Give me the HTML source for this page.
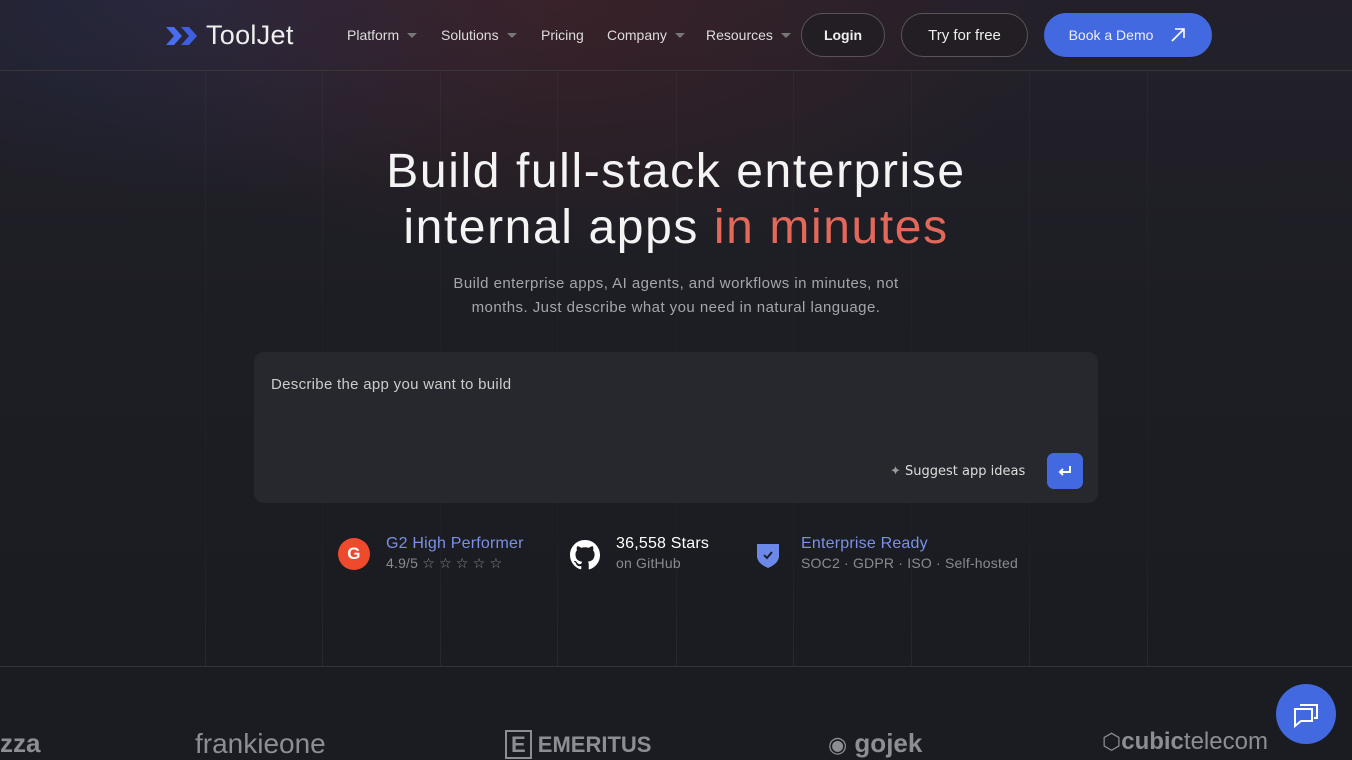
<!DOCTYPE html>
<html><head><meta charset="utf-8"><style>
*{margin:0;padding:0;box-sizing:border-box}
body{width:1352px;height:760px;overflow:hidden;background:#1a1c21;font-family:"Liberation Sans","DejaVu Sans",sans-serif;color:#fff;position:relative}
.bg{position:absolute;left:0;top:0;width:1352px;height:666px;background:radial-gradient(ellipse 500px 260px at 560px 0px,rgba(80,35,40,.5),transparent),radial-gradient(ellipse 400px 200px at 200px 0,rgba(40,50,90,.45),transparent),linear-gradient(#23202a 0,#1d1e24 300px,#1a1c21 666px)}
.vl{position:absolute;top:71px;height:595px;width:1px;background:linear-gradient(rgba(255,255,255,.03),rgba(255,255,255,.015) 40%,rgba(255,255,255,.015) 80%,rgba(255,255,255,.06))}
.hl{position:absolute;left:0;width:1352px;height:1px;background:#33343b}
nav{position:absolute;top:0;left:0;width:1352px;height:70px}
.logo{position:absolute;left:165px;top:20px;display:flex;align-items:center;font-size:27px;color:#eee;letter-spacing:.3px}
.menu{position:absolute;top:27px;font-size:14px;color:#ddd}
.car{display:inline-block;width:0;height:0;border-left:5px solid transparent;border-right:5px solid transparent;border-top:5px solid #777;margin-left:8px;vertical-align:2px}
.btn{position:absolute;top:13px;height:44px;border-radius:22px;border:1px solid #5a5458;display:flex;align-items:center;justify-content:center;font-size:15px;color:#eee;background:#221e24}
h1{position:absolute;top:144px;left:0;width:1352px;text-align:center;font-size:48px;font-weight:normal;line-height:56px;color:#f4f4f4;letter-spacing:1.6px}
h1 span{color:#e2685a}
.sub{position:absolute;top:272px;left:0;width:1352px;text-align:center;font-size:15px;line-height:24px;color:#a4a6ad;letter-spacing:.45px}
.box{position:absolute;left:254px;top:352px;width:844px;height:151px;background:#26282d;border-radius:10px}
.stat{position:absolute;top:535px;font-size:16px;letter-spacing:.2px}
.stat small{display:block;font-size:14px;color:#888b92;margin-top:2px}
.logos{position:absolute;top:728px;font-size:26px;color:#8c8e93;font-weight:bold}
</style></head><body>
<div class="bg"></div>
<div class="vl" style="left:205px"></div><div class="vl" style="left:322px"></div><div class="vl" style="left:440px"></div><div class="vl" style="left:557px"></div><div class="vl" style="left:676px"></div><div class="vl" style="left:793px"></div><div class="vl" style="left:911px"></div><div class="vl" style="left:1029px"></div><div class="vl" style="left:1147px"></div>
<div class="hl" style="top:70px;background:#3a3539"></div>
<div class="hl" style="top:666px"></div>
<nav>
<div class="logo"><svg width="36" height="24" viewBox="0 0 36 24"><path d="M1 3h8l8 9-8 9H1l8-9z" fill="#4a6cf0"/><path d="M16 3h8l8 9-8 9h-8l8-9z" fill="#3d5fe0"/></svg><span style="margin-left:5px">ToolJet</span></div>
<div class="menu" style="left:347px">Platform<span class="car"></span></div>
<div class="menu" style="left:441px">Solutions<span class="car"></span></div>
<div class="menu" style="left:541px">Pricing</div>
<div class="menu" style="left:607px">Company<span class="car"></span></div>
<div class="menu" style="left:706px">Resources<span class="car"></span></div>
<div class="btn" style="left:801px;width:84px;font-weight:bold;font-size:14px">Login</div>
<div class="btn" style="left:901px;width:127px">Try for free</div>
<div class="btn" style="left:1044px;width:168px;background:#4369e0;border-color:#4369e0;font-size:14px">Book a Demo<svg style="margin-left:16px" width="18" height="18" viewBox="0 0 18 18"><path d="M3 15L15 3M6 3h9v9" stroke="#fff" stroke-width="1.6" fill="none"/></svg></div>
</nav>
<h1>Build full-stack enterprise<br>internal apps <span>in minutes</span></h1>
<div class="sub">Build enterprise apps, AI agents, and workflows in minutes, not<br>months. Just describe what you need in natural language.</div>
<div class="box">
<div style="position:absolute;left:17px;top:24px;font-size:15px;color:#ccc;letter-spacing:.3px">Describe the app you want to build</div>
<div style="position:absolute;left:636px;top:112px;font-size:13px;color:#ddd;font-family:'DejaVu Sans',sans-serif"><span style="color:#999">✦</span> Suggest app ideas</div>
<div style="position:absolute;left:793px;top:101px;width:36px;height:36px;border-radius:7px;background:#4369e0;display:flex;align-items:center;justify-content:center"><svg width="16" height="14" viewBox="0 0 16 14"><path d="M13 2v6H3M6 5L3 8l3 3" stroke="#fff" stroke-width="2" fill="none"/></svg></div>
</div>
<div class="stat" style="left:338px"><div style="position:absolute;left:0;top:3px;width:32px;height:32px;border-radius:50%;background:#ef4a2c;color:#fff;font-weight:bold;font-size:17px;text-align:center;line-height:32px">G</div><div style="margin-left:48px;color:#7b90e6">G2 High Performer<small>4.9/5 ☆ ☆ ☆ ☆ ☆</small></div></div>
<div class="stat" style="left:570px"><svg style="position:absolute;left:0;top:5px" width="30" height="30" viewBox="0 0 16 16"><path fill="#fff" d="M8 0C3.58 0 0 3.58 0 8c0 3.54 2.29 6.53 5.47 7.59.4.07.55-.17.55-.38v-1.33c-2.23.48-2.7-1.07-2.7-1.07-.36-.92-.89-1.17-.89-1.17-.73-.5.06-.49.06-.49.8.06 1.23.83 1.23.83.71 1.23 1.87.87 2.33.66.07-.52.28-.87.5-1.07-1.78-.2-3.64-.89-3.64-3.95 0-.87.31-1.59.82-2.15-.08-.2-.36-1.02.08-2.12 0 0 .67-.21 2.2.82a7.6 7.6 0 014 0c1.53-1.04 2.2-.82 2.2-.82.44 1.1.16 1.92.08 2.12.51.56.82 1.27.82 2.15 0 3.07-1.87 3.75-3.65 3.95.29.25.54.73.54 1.48v2.2c0 .21.15.46.55.38A8 8 0 0016 8c0-4.42-3.58-8-8-8z"/></svg><div style="margin-left:46px;color:#fff">36,558 Stars<small>on GitHub</small></div></div>
<div class="stat" style="left:756px"><svg style="position:absolute;left:0;top:7px" width="24" height="26" viewBox="0 0 24 26"><path d="M1 2h22v12c0 6-6 10-11 12C7 24 1 20 1 14z" fill="#6c88e8"/><path d="M8 13l3 3 5-6" stroke="#1a1c21" stroke-width="1.8" fill="none"/></svg><div style="margin-left:45px;color:#7b90e6">Enterprise Ready<small>SOC2 · GDPR · ISO · Self-hosted</small></div></div>
<div class="logos" style="left:0">zza</div>
<div class="logos" style="left:195px;font-size:28px;font-weight:normal">frankieone</div>
<div class="logos" style="left:505px;font-size:22px;top:732px"><span style="border:2px solid #8c8e93;padding:0 4px">E</span> EMERITUS</div>
<div class="logos" style="left:828px"><span style="font-size:22px">◉</span> gojek</div>
<div class="logos" style="left:1102px;font-size:24px"><span style="font-size:22px">⬡</span>cubic<span style="font-weight:normal">telecom</span></div>
<div style="position:absolute;left:1276px;top:684px;width:60px;height:60px;border-radius:50%;background:#4369e0;display:flex;align-items:center;justify-content:center"><svg width="30" height="30" viewBox="0 0 30 30" fill="none" stroke="#fff" stroke-width="2"><path d="M9 6h17v13h-3"/><path d="M4 10h17v12H10l-6 5z"/></svg></div>
</body></html>
